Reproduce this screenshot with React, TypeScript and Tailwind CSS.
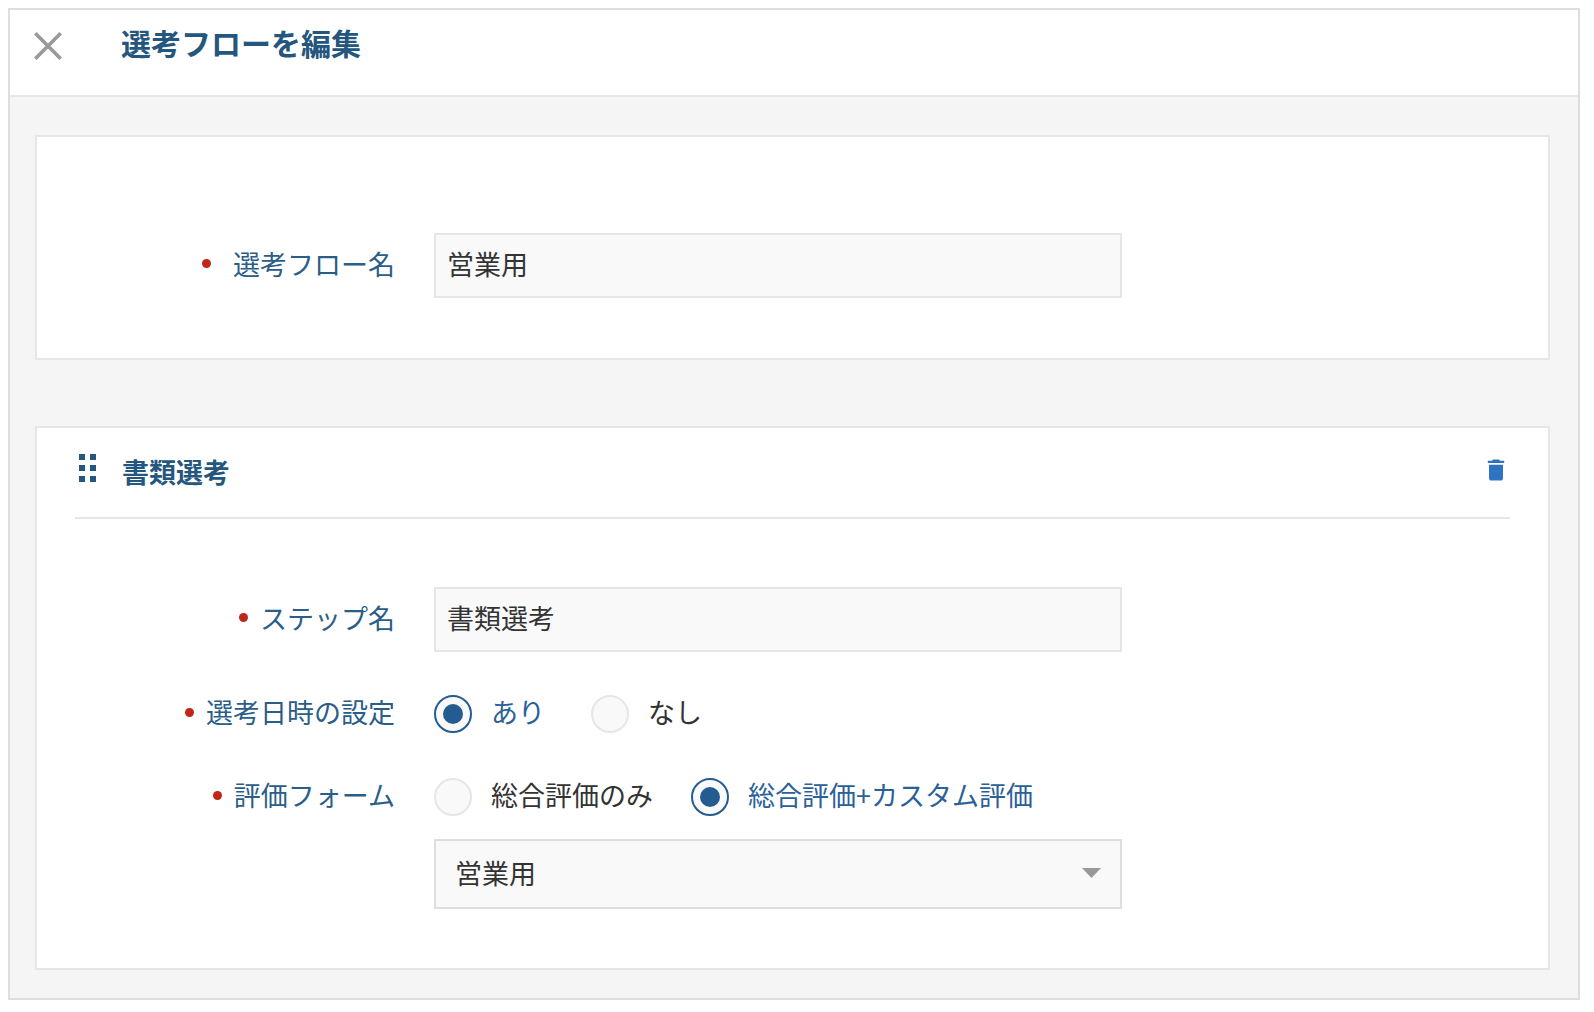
import { useState, type ReactNode } from "react";

function CloseIcon() {
  return (
    <svg className="size-7" viewBox="0 0 28 28" fill="none" stroke="currentColor" strokeWidth="3.6" aria-hidden="true">
      <path d="M1.3 1.3 26.7 26.7M26.7 1.3 1.3 26.7" />
    </svg>
  );
}

function GripIcon() {
  return (
    <svg className="h-7 w-[17px]" viewBox="0 0 17 28" fill="currentColor" aria-hidden="true">
      {[0, 11, 22].map((y) => (
        <g key={y}>
          <rect x="0" y={y} width="6" height="6" />
          <rect x="11" y={y} width="6" height="6" />
        </g>
      ))}
    </svg>
  );
}

function TrashIcon() {
  return (
    <svg className="size-7" viewBox="0 0 24 24" fill="currentColor" aria-hidden="true">
      <path d="M6 19c0 1.1.9 2 2 2h8c1.1 0 2-.9 2-2V7.6H6V19zM19 4h-3.500l-1-1h-5l-1 1H5v2h14V4z" />
    </svg>
  );
}

function Required({ children, wide = false }: { children: ReactNode; wide?: boolean }) {
  return (
    <span className={`flex items-center justify-end pb-1 ${wide ? "gap-[22px]" : "gap-3"}`}>
      <span className="size-[9px] rounded-full bg-[#c0271a]" aria-hidden="true" />
      <span>{children}</span>
    </span>
  );
}

const labelClass = "w-[320px] shrink-0 text-[#2a5d87]";
const inputClass =
  "h-[65px] w-full max-w-[688px] border-2 border-[#e6e6e6] bg-[#f9f9f9] px-[11px] pb-1 text-[#333] outline-none";

function RadioOption({
  name,
  label,
  checked,
  onSelect,
}: {
  name: string;
  label: string;
  checked: boolean;
  onSelect: () => void;
}) {
  return (
    <label className="flex cursor-pointer items-center gap-[19px]">
      <input
        type="radio"
        name={name}
        checked={checked}
        onChange={onSelect}
        className="grid size-[38px] shrink-0 appearance-none place-items-center rounded-full border-2 border-[#e6e6e6] bg-[#f9f9f9] checked:border-[#245c92] checked:before:size-5 checked:before:rounded-full checked:before:bg-[#245c92]"
      />
      <span className={`min-w-[62px] pb-1 ${checked ? "text-[#2a6197]" : "text-[#333]"}`}>{label}</span>
    </label>
  );
}

function RadioRow({
  name,
  label,
  options,
  value,
  onChange,
}: {
  name: string;
  label: string;
  options: string[];
  value: string;
  onChange: (value: string) => void;
}) {
  return (
    <div role="radiogroup" aria-labelledby={`${name}-label`} className="flex items-center gap-[39px]">
      <div id={`${name}-label`} className={labelClass}>
        <Required>{label}</Required>
      </div>
      <div className="flex items-center gap-[38px]">
        {options.map((option) => (
          <RadioOption
            key={option}
            name={name}
            label={option}
            checked={value === option}
            onSelect={() => onChange(option)}
          />
        ))}
      </div>
    </div>
  );
}

export default function App() {
  const [flowName, setFlowName] = useState("営業用");
  const [stepName, setStepName] = useState("書類選考");
  const [schedule, setSchedule] = useState("あり");
  const [form, setForm] = useState("総合評価+カスタム評価");

  return (
    <div className="bg-white pt-2 pr-[14px] pb-3 pl-2 font-['Noto_Sans_CJK_JP',sans-serif] text-[27px] leading-[34px]">
      <main className="border-2 border-[#dedede] bg-[#f5f5f5]">
        <header className="flex h-[87px] items-start gap-[59px] border-b-2 border-[#e6e6e6] bg-white px-6 pt-[14px]">
          <button type="button" aria-label="閉じる" className="mt-2 text-[#999]">
            <CloseIcon />
          </button>
          <h1 className="text-[30px] leading-9 font-bold text-[#25567e]">選考フローを編集</h1>
        </header>

        <div className="flex flex-col gap-[66px] pt-[38px] pr-7 pb-7 pl-[25px]">
          <section className="border-2 border-[#e6e6e6] bg-white px-[38px] pt-24 pb-[60px]">
            <div className="flex items-center gap-[39px]">
              <label htmlFor="flow-name" className={labelClass}>
                <Required wide>選考フロー名</Required>
              </label>
              <input
                id="flow-name"
                type="text"
                value={flowName}
                onChange={(e) => setFlowName(e.target.value)}
                className={inputClass}
              />
            </div>
          </section>

          <section className="border-2 border-[#e6e6e6] bg-white px-[38px] pb-[59px]">
            <div className="flex h-[91px] items-start justify-between border-b-2 border-[#e6e6e6] pt-[26px]">
              <div className="flex items-start gap-[26px] pl-1 text-[#25567e]">
                <button type="button" aria-label="並べ替え">
                  <GripIcon />
                </button>
                <h2 className="leading-9 font-bold">書類選考</h2>
              </div>
              <button type="button" aria-label="削除" className="mt-0.5 text-[#2f74c0]">
                <TrashIcon />
              </button>
            </div>

            <div className="flex flex-col pt-[68px]">
              <div className="flex items-center gap-[39px]">
                <label htmlFor="step-name" className={labelClass}>
                  <Required>ステップ名</Required>
                </label>
                <input
                  id="step-name"
                  type="text"
                  value={stepName}
                  onChange={(e) => setStepName(e.target.value)}
                  className={inputClass}
                />
              </div>
              <div className="mt-[43px] flex flex-col gap-[45px]">
                <RadioRow
                  name="schedule"
                  label="選考日時の設定"
                  options={["あり", "なし"]}
                  value={schedule}
                  onChange={setSchedule}
                />
                <RadioRow
                  name="form"
                  label="評価フォーム"
                  options={["総合評価のみ", "総合評価+カスタム評価"]}
                  value={form}
                  onChange={setForm}
                />
              </div>
              <div className="mt-[23px] pl-[359px]">
                <div className="relative max-w-[688px]">
                  <select
                    aria-label="評価フォームの選択"
                    className="h-[70px] w-full appearance-none border-2 border-[#dedede] bg-[#f9f9f9] px-[19px] pb-0.5 text-[#333] outline-none"
                  >
                    <option>営業用</option>
                  </select>
                  <svg
                    className="pointer-events-none absolute top-[29px] right-[21px] h-[10px] w-[19px] text-[#999]"
                    viewBox="0 0 19 10"
                    fill="currentColor"
                    aria-hidden="true"
                  >
                    <path d="M0 0h19l-9.500 10z" />
                  </svg>
                </div>
              </div>
            </div>
          </section>
        </div>
      </main>
    </div>
  );
}
